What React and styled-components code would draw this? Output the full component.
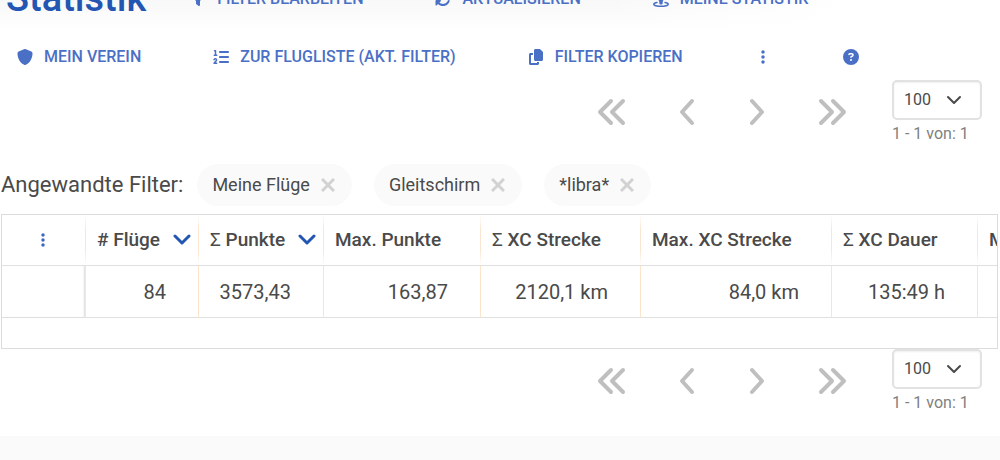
import React from 'react';
import styled, { createGlobalStyle } from 'styled-components';
import {
  FaShield,
  FaListOl,
  FaCopy,
  FaEllipsisVertical,
  FaCircleQuestion,
  FaFilter,
  FaRotate,
  FaStreetView,
} from 'react-icons/fa6';

const GlobalStyle = createGlobalStyle`
  * { box-sizing: border-box; }
  body {
    margin: 0;
    background: #fafafa;
    color: #4a4a4a;
    font-family: Roboto, "Liberation Sans", sans-serif;
    overflow: hidden;
  }
`;

const Page = styled.main`
  background: #fff;
  padding-bottom: 23px;
`;

const TopBar = styled.header`
  display: flex;
  align-items: flex-end;
  gap: 44px;
  height: 31px;
  padding: 0 6px 14px;
  overflow: hidden;
  background: linear-gradient(to right, transparent 60%, #fff 85%),
    linear-gradient(to bottom, #f8f8f8, #fff);
`;

const Title = styled.h1`
  margin: 0;
  padding-bottom: 5px;
  font-size: 38px;
  line-height: 28px;
  font-weight: 500;
  color: #2355b3;
`;

const Toolbar = styled.nav`
  display: flex;
  align-items: center;
  gap: 72px;
  padding: ${(p) => (p.$inset ? '2px 17px 0' : '0')};
  height: ${(p) => (p.$inset ? '49px' : '36px')};
`;

const ToolButton = styled.button`
  display: flex;
  align-items: center;
  gap: 11px;
  flex: none;
  padding: 0;
  border: 0;
  background: none;
  color: #4a70c6;
  font: 500 16px/20px Roboto, "Liberation Sans", sans-serif;
  text-transform: uppercase;
  white-space: nowrap;
  cursor: pointer;

  svg {
    display: block;
    width: 16px;
    height: 16px;
  }
`;

const PagerBar = styled.div`
  display: flex;
  justify-content: flex-end;
  align-items: flex-start;
  gap: 44px;
  padding-right: 18px;
`;

const PagerButtons = styled.div`
  display: flex;
  gap: 52px;
  padding-top: 18px;
`;

const PagerButton = styled.button`
  display: block;
  padding: 0;
  border: 0;
  background: none;
  color: #bfbfbf;

  svg {
    display: block;
    fill: none;
    stroke: currentColor;
    stroke-width: 4;
    stroke-linecap: round;
    stroke-linejoin: round;
  }
`;

const PageSize = styled.div`
  width: 90px;
`;

const SelectBox = styled.div`
  position: relative;

  svg {
    position: absolute;
    top: 15px;
    right: 20px;
    fill: none;
    stroke: #4a4a4a;
    stroke-width: 2;
    stroke-linecap: round;
    stroke-linejoin: round;
    pointer-events: none;
  }
`;

const Select = styled.select`
  display: block;
  appearance: none;
  width: 100%;
  height: 40px;
  padding: 0 10px;
  border: 2px solid #e2e2e2;
  border-radius: 5px;
  background: #fff;
  box-shadow: inset 0 1px 2px #0001;
  color: #4a4a4a;
  font: 400 16px/20px Roboto, "Liberation Sans", sans-serif;
`;

const RangeText = styled.div`
  margin-top: 4px;
  font-size: 16px;
  line-height: 20px;
  color: #7f7f7f;
  white-space: nowrap;
`;

const FilterBar = styled.section`
  display: flex;
  align-items: center;
  gap: 22px;
  margin-top: 20px;
  padding-left: 1px;
  height: 42px;
`;

const FilterLabel = styled.h2`
  margin: 0 -8px 0 0;
  font-size: 22px;
  line-height: 24px;
  font-weight: 400;
`;

const Chip = styled.span`
  display: flex;
  align-items: center;
  gap: 11px;
  height: 42px;
  padding: 0 17px 0 15px;
  border-radius: 21px;
  background: #fafafa;
  font-size: 18px;
  line-height: 20px;
`;

const ChipRemove = styled.button`
  padding: 0;
  border: 0;
  background: none;

  svg {
    display: block;
    stroke: #d2d2d2;
    stroke-width: 3;
  }
`;

const TableFrame = styled.div`
  margin: 8px 2px 0 1px;
  border: 1px solid #dcdcdc;
  overflow: hidden;
`;

const Table = styled.table`
  table-layout: fixed;
  width: 1160px;
  border-collapse: separate;
  border-spacing: 0;
`;

const HeadCell = styled.th`
  height: 50px;
  padding: 0 0 0 11px;
  border-right: 1px solid;
  border-image: linear-gradient(#fff0, #fbe6d2 30%, #fbe6d2 70%, #fff0) 1;
  border-image-width: 0 1px 0 0;
  text-align: left;
  font-size: 19px;
  line-height: 24px;
  font-weight: 500;
  white-space: nowrap;
`;

const HeadContent = styled.div`
  display: flex;
  align-items: center;
  gap: 13px;

  svg.sort {
    fill: none;
    stroke: #2355b3;
    stroke-width: 3;
    stroke-linecap: round;
    stroke-linejoin: round;
  }
`;

const Sigma = styled.span`
  font-weight: 400;
`;

const MenuButton = styled.button`
  display: block;
  margin: 0 auto;
  padding: 0 12px 0 0;
  border: 0;
  background: none;
  color: #3f68c3;

  svg {
    display: block;
    width: 16px;
    height: 16px;
  }
`;

const Cell = styled.td`
  height: 53px;
  padding: 0 32px 0 0;
  border-top: 1px solid #e0e0e0;
  border-bottom: 1px solid #e0e0e0;
  border-right: 1px solid #fbe3cc;
  ${(p) => p.$pinned && 'box-shadow: inset -2px 0 2px -1px #0002;'}
  text-align: right;
  font-size: 20px;
  line-height: 24px;
  white-space: nowrap;
`;

const FillerCell = styled.td`
  height: 30px;
  padding: 0;
`;

const columns = [
  { width: 113, label: '# Flüge', sorted: true, value: '84' },
  { width: 125, sum: true, label: 'Punkte', sorted: true, value: '3573,43' },
  { width: 157, label: 'Max. Punkte', value: '163,87' },
  { width: 160, sum: true, label: 'XC Strecke', value: '2120,1 km' },
  { width: 191, label: 'Max. XC Strecke', value: '84,0 km' },
  { width: 146, sum: true, label: 'XC Dauer', value: '135:49 h' },
  { width: 184, label: 'Max. XC Dauer', value: '' },
];

const filters = ['Meine Flüge', 'Gleitschirm', '*libra*'];

const pagerSteps = [
  { label: 'Erste Seite', width: 30, d: 'M15 3 L4 14 L15 25 M27 3 L16 14 L27 25' },
  { label: 'Vorherige Seite', width: 18, d: 'M14 3 L4 14 L14 25' },
  { label: 'Nächste Seite', width: 18, d: 'M4 3 L14 14 L4 25' },
  { label: 'Letzte Seite', width: 30, d: 'M3 3 L14 14 L3 25 M15 3 L26 14 L15 25' },
];

function Tool({ icon: Icon, label, children }) {
  return (
    <ToolButton type="button" aria-label={label}>
      <Icon aria-hidden="true" />
      {children}
    </ToolButton>
  );
}

function Pager({ id }) {
  return (
    <PagerBar>
      <PagerButtons>
        {pagerSteps.map((s) => (
          <PagerButton key={s.label} type="button" aria-label={s.label}>
            <svg width={s.width} height="28" viewBox={`0 0 ${s.width} 28`}>
              <path d={s.d} />
            </svg>
          </PagerButton>
        ))}
      </PagerButtons>
      <PageSize>
        <SelectBox>
          <Select id={id} aria-label="Einträge pro Seite" defaultValue="100">
            <option>50</option>
            <option>100</option>
          </Select>
          <svg width="16" height="10" viewBox="0 0 16 10" aria-hidden="true">
            <path d="M2 2 L8 8 L14 2" />
          </svg>
        </SelectBox>
        <RangeText>1 - 1 von: 1</RangeText>
      </PageSize>
    </PagerBar>
  );
}

export default function App() {
  return (
    <>
      <GlobalStyle />
      <Page>
        <TopBar>
          <Title>Statistik</Title>
          <Toolbar>
            <Tool icon={FaFilter}>Filter bearbeiten</Tool>
            <Tool icon={FaRotate}>Aktualisieren</Tool>
            <Tool icon={FaStreetView}>Meine Statistik</Tool>
          </Toolbar>
        </TopBar>
        <Toolbar $inset>
          <Tool icon={FaShield}>Mein Verein</Tool>
          <Tool icon={FaListOl}>Zur Flugliste (akt. Filter)</Tool>
          <Tool icon={FaCopy}>Filter kopieren</Tool>
          <Tool icon={FaEllipsisVertical} label="Mehr" />
          <Tool icon={FaCircleQuestion} label="Hilfe" />
        </Toolbar>
        <Pager id="size-top" />
        <FilterBar>
          <FilterLabel>Angewandte Filter:</FilterLabel>
          {filters.map((f) => (
            <Chip key={f}>
              {f}
              <ChipRemove type="button" aria-label={`${f} entfernen`}>
                <svg width="14" height="14" viewBox="0 0 14 14">
                  <path d="M1 1 L13 13 M13 1 L1 13" />
                </svg>
              </ChipRemove>
            </Chip>
          ))}
        </FilterBar>
        <TableFrame>
          <Table>
            <colgroup>
              <col width="84" />
              {columns.map((c) => (
                <col key={c.label} width={c.width} />
              ))}
            </colgroup>
            <thead>
              <tr>
                <HeadCell>
                  <MenuButton type="button" aria-label="Spalten">
                    <FaEllipsisVertical />
                  </MenuButton>
                </HeadCell>
                {columns.map((c) => (
                  <HeadCell key={c.label}>
                    <HeadContent>
                      <span>
                        {c.sum && <Sigma>Σ </Sigma>}
                        {c.label}
                      </span>
                      {c.sorted && (
                        <svg className="sort" width="18" height="12" viewBox="0 0 18 12">
                          <path d="M2 2 L9 9 L16 2" />
                        </svg>
                      )}
                    </HeadContent>
                  </HeadCell>
                ))}
              </tr>
            </thead>
            <tbody>
              <tr>
                <Cell $pinned />
                {columns.map((c) => (
                  <Cell key={c.label}>{c.value}</Cell>
                ))}
              </tr>
              <tr>
                <FillerCell colSpan={columns.length + 1} />
              </tr>
            </tbody>
          </Table>
        </TableFrame>
        <Pager id="size-bottom" />
      </Page>
    </>
  );
}
